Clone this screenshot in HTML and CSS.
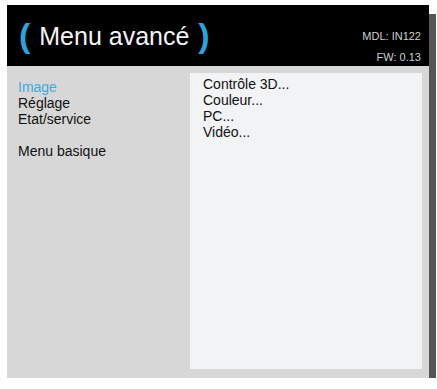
FILE: index.html
```html
<!DOCTYPE html>
<html lang="fr">
<head>
  <meta charset="UTF-8">
  <title>Menu avancé</title>
  <link rel="stylesheet" href="styles.css">
</head>
<body>
<div class="screen">
  <div class="header">
    <h1 class="title"><span class="paren">(</span> Menu avancé <span class="paren">)</span></h1>
    <div class="info">
      <span>MDL: IN122</span>
      <span>FW: 0.13</span>
    </div>
  </div>

  <div class="main">
    <ul class="side">
      <li class="active">Image</li>
      <li>Réglage</li>
      <li>Etat/service</li>
      <li class="gap">Menu basique</li>
    </ul>

    <ul class="content">
      <li>Contrôle 3D...</li>
      <li>Couleur...</li>
      <li>PC...</li>
      <li>Vidéo...</li>
    </ul>
  </div>
</div>
</body>
</html>
```

FILE: styles.css
```css
body {
  margin: 0;
  background: #ffffff;
  font-family: 'Liberation Sans', Arial, sans-serif;
  color: #111111;
}

.screen {
  width: 422px;
  margin: 5px 0 0 7px;
  box-shadow: 7px 9px 0 #555555;
}

.header {
  display: flex;
  justify-content: space-between;
  height: 61px;
  padding: 0 8px 0 10px;
  background: #000000;
  box-sizing: border-box;
}

.title {
  margin: 0;
  margin-top: -2px;
  align-self: center;
  font-size: 25px;
  font-weight: normal;
  line-height: 1;
  color: #f4f4f4;
}

.paren {
  margin: 0 2px;
  font-size: 34px;
  font-weight: bold;
  color: #2ba3dc;
  vertical-align: -2px;
}

.info {
  display: flex;
  flex-direction: column;
  align-items: flex-end;
  gap: 8px;
  padding-top: 25px;
  font-size: 11px;
  line-height: 13px;
  color: #cfcfcf;
}

.main {
  display: flex;
  height: 312px;
  padding: 7px 7px 9px 0;
  background: #d7d7d7;
  box-sizing: border-box;
}

ul {
  margin: 0;
  list-style: none;
  font-size: 14px;
  line-height: 16px;
}

.side {
  width: 183px;
  padding: 6px 0 0 11px;
  box-sizing: border-box;
}

.active {
  color: #46a8d9;
}

.gap {
  margin-top: 16px;
}

.content {
  flex: 1;
  padding: 3px 0 0 13px;
  background: #f2f3f5;
}
```
